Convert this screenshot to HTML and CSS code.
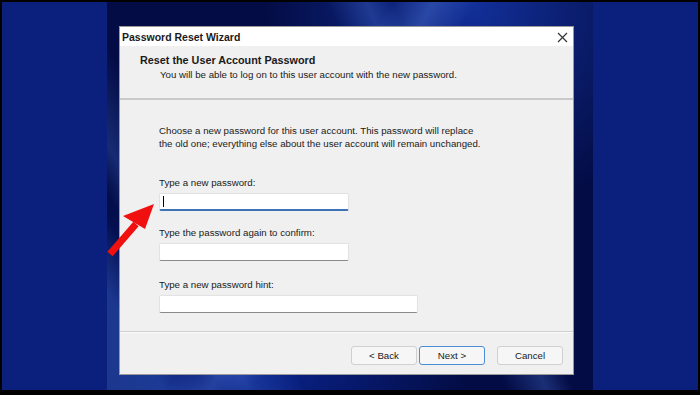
FILE: index.html
```html
<!doctype html>
<html>
<head>
  <link rel="stylesheet" href="styles.css">
</head>
<body>
  <div class="frame">
    <div class="side"></div>
    <div class="screen">
      <div class="dialog">
        <div class="titlebar">
          <span class="title">Password Reset Wizard</span>
          <svg class="close" width="11" height="11" viewBox="0 0 11 11"><path d="M1 1L10 10M10 1L1 10" stroke="#333" stroke-width="1.2"/></svg>
        </div>
        <div class="header">
          <div class="head-title">Reset the User Account Password</div>
          <div class="head-sub">You will be able to log on to this user account with the new password.</div>
        </div>
        <div class="sep"></div>
        <div class="content">
          <p class="intro">Choose a new password for this user account. This password will replace<br>the old one; everything else about the user account will remain unchanged.</p>
          <div class="field first">
            <div class="label">Type a new password:</div>
            <div class="input active"><span class="caret"></span></div>
          </div>
          <div class="field second">
            <div class="label">Type the password again to confirm:</div>
            <div class="input"></div>
          </div>
          <div class="field third">
            <div class="label">Type a new password hint:</div>
            <div class="input wide"></div>
          </div>
        </div>
        <div class="sep thin"></div>
        <div class="footer">
          <button class="btn">&lt; Back</button>
          <button class="btn default">Next &gt;</button>
          <button class="btn cancel">Cancel</button>
        </div>
      </div>
    </div>
    <div class="side"></div>
  </div>

  <svg class="arrow" width="700" height="395" viewBox="0 0 700 395">
    <line x1="110" y1="254" x2="136" y2="224" stroke="#f01010" stroke-width="7"/>
    <polygon points="154,204 123,216 145,229" fill="#f01010"/>
  </svg>
</body>
</html>
```

FILE: styles.css
```css
body {
  margin: 0;
  background: #000;
  font-family: "Liberation Sans", Arial, sans-serif;
  font-size: 9.7px;
  color: #1a1a1a;
}
.frame {
  display: flex;
  height: 388px;
  margin: 2px 2px 0 2px;
}
.side {
  width: 105px;
  background: #0b1f7c;
}
.screen {
  flex: 1;
  padding: 24px 0 0 12px;
  background:
    linear-gradient(120deg, transparent 0 40%, rgba(90,130,220,0.35) 46%, transparent 52%),
    linear-gradient(65deg, transparent 0 60%, rgba(70,110,210,0.35) 66%, transparent 70%),
    linear-gradient(60deg, rgba(50,90,190,0.5) 0 8%, transparent 14% 16%, rgba(60,100,200,0.35) 20%, transparent 28%),
    radial-gradient(ellipse at 30% 90%, #0a2590 0, transparent 45%),
    radial-gradient(ellipse at 75% 0%, #12309a 0, transparent 40%),
    #030c45;
}
.dialog {
  width: 453px;
  height: 347px;
  border: 1px solid #9a9a9a;
  background: #f0f0f0;
  display: flex;
  flex-direction: column;
}
.titlebar {
  height: 19px;
  background: #fff;
  display: flex;
  align-items: center;
  justify-content: space-between;
  padding: 0 5px 0 2px;
}
.title {
  font-weight: bold;
  font-size: 10.5px;
}
.close {
  margin-top: 1px;
}
.header {
  height: 52px;
  box-sizing: border-box;
  padding: 8px 0 0 20px;
  line-height: 13px;
}
.head-title {
  font-weight: bold;
  font-size: 10.8px;
}
.head-sub {
  margin: 1px 0 0 20px;
}
.sep {
  height: 2px;
  background: #c9c9c9;
}
.sep.thin {
  height: 1px;
  background: #cfcfcf;
  border-bottom: 1px solid #fafafa;
}
.content {
  flex: 1;
  padding: 24px 0 0 39px;
  line-height: 13px;
}
.intro {
  margin: 0;
}
.field.first {
  margin-top: 26px;
}
.field.second {
  margin-top: 15px;
}
.field.third {
  margin-top: 17px;
}
.label {
  margin-bottom: 4px;
}
.input {
  width: 190px;
  height: 18px;
  box-sizing: border-box;
  background: #fff;
  border: 1px solid #e2e2e2;
  border-bottom-color: #8a8a8a;
  border-radius: 2px;
  display: flex;
  align-items: center;
  padding-left: 3px;
}
.input.active {
  border-bottom: 2px solid #3f73b8;
}
.input.wide {
  width: 259px;
}
.caret {
  width: 1px;
  height: 11px;
  background: #000;
}
.footer {
  height: 41px;
  box-sizing: border-box;
  display: flex;
  justify-content: flex-end;
  padding: 13px 10px 0 0;
}
.btn {
  width: 66px;
  height: 19px;
  margin: 0 0 0 2px;
  padding: 0;
  font-family: "Liberation Sans", Arial, sans-serif;
  font-size: 9.7px;
  color: #1a1a1a;
  background: #f6f6f6;
  border: 1px solid #d0d0d0;
  border-radius: 3px;
}
.btn.default {
  border-color: #4a8ed6;
}
.btn.cancel {
  margin-left: 12px;
}
.arrow {
  position: absolute;
  left: 0;
  top: 0;
  pointer-events: none;
}
```
